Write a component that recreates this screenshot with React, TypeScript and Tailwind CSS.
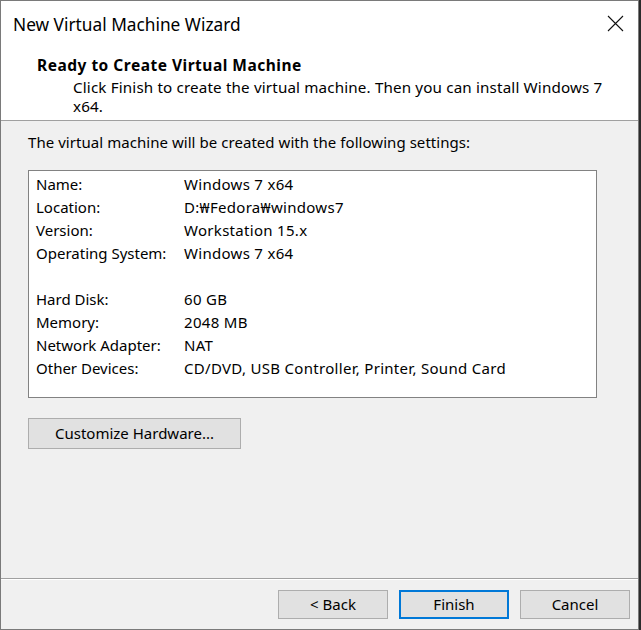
const rows: [string, string][] = [
  ["Name:", "Windows 7 x64"],
  ["Location:", "D:\u20A9Fedora\u20A9windows7"],
  ["Version:", "Workstation 15.x"],
  ["Operating System:", "Windows 7 x64"],
  ["", ""],
  ["Hard Disk:", "60 GB"],
  ["Memory:", "2048 MB"],
  ["Network Adapter:", "NAT"],
  ["Other Devices:", "CD/DVD, USB Controller, Printer, Sound Card"],
];

function WinButton({ label, primary }: { label: string; primary?: boolean }) {
  return (
    <button
      className={
        primary
          ? "h-[29px] w-[110px] border-2 border-[#0078d7] bg-[#e1e1e1] text-[15px] text-black"
          : "h-[29px] w-[110px] border border-[#adadad] bg-[#e1e1e1] text-[15px] text-black"
      }
    >
      {label}
    </button>
  );
}

export default function App() {
  return (
    <div className="flex h-[630px] w-[641px] bg-[#2b2b2b] font-['Noto_Sans',sans-serif]">
      <div className="flex h-[630px] w-[639px] flex-col border border-[#7a7a7a] bg-[#f0f0f0] text-black">
        {/* title bar */}
        <div className="flex h-[47px] items-center justify-between bg-white pl-[12px] pr-[14px]">
          <span className="text-[17.3px]">New Virtual Machine Wizard</span>
          <svg width="17" height="17" viewBox="0 0 17 17" className="mb-[2px]">
            <path d="M1 1 L16 16 M16 1 L1 16" stroke="#111" strokeWidth="1.1" />
          </svg>
        </div>

        {/* header */}
        <div className="border-b border-[#a0a0a0] bg-white pb-[4px] pl-[36px] pt-[7px]">
          <div className="text-[15.5px] font-bold leading-[20px] tracking-[0.5px]">
            Ready to Create Virtual Machine
          </div>
          <p className="mt-[3px] w-[566px] pl-[36px] text-[15.2px] leading-[19px] tracking-[0.15px]">
            Click Finish to create the virtual machine. Then you can install Windows 7 x64.
          </p>
        </div>

        {/* body */}
        <div className="flex-1 px-[27px] pt-[11px]">
          <p className="text-[15px] leading-[20px] tracking-[0.05px]">
            The virtual machine will be created with the following settings:
          </p>
          <div className="mt-[18px] h-[228px] w-[569px] border border-[#828282] bg-white pl-[7px] pt-[2px]">
            {rows.map(([label, value], i) => (
              <div key={i} className="flex h-[23px] items-center text-[15px]">
                <span className="w-[148px]">{label}</span>
                <span className="tracking-[0.3px]">{value}</span>
              </div>
            ))}
          </div>
          <button className="mt-[20px] h-[31px] w-[213px] border border-[#adadad] bg-[#e1e1e1] text-[15px]">
            Customize Hardware...
          </button>
        </div>

        {/* footer */}
        <div className="flex h-[51px] justify-end gap-[11px] border-t border-[#a0a0a0] pr-[8px] pt-[11px] shadow-[inset_0_1px_0_#ffffff]">
          <WinButton label="< Back" />
          <WinButton label="Finish" primary />
          <WinButton label="Cancel" />
        </div>
      </div>
    </div>
  );
}
